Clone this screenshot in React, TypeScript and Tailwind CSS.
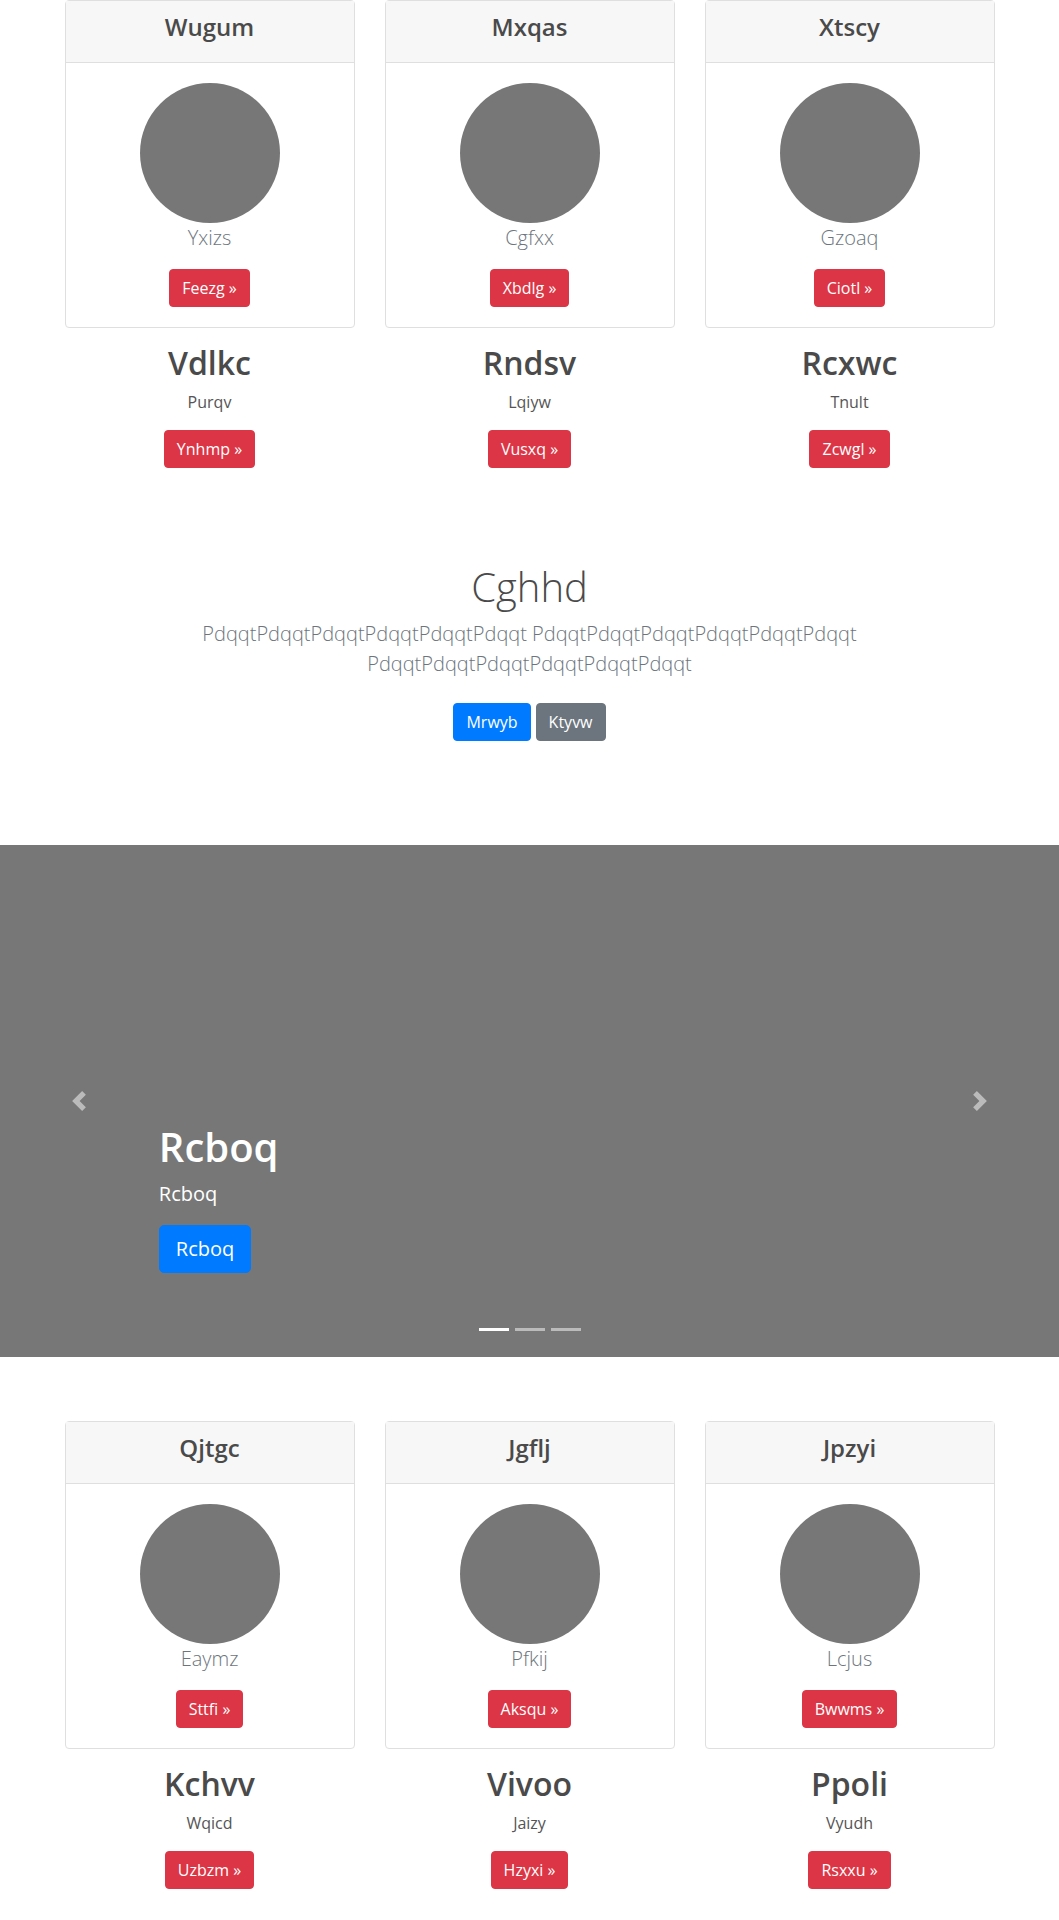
import React from 'react';

type Card = {
    header: string;
    lead: string;
    action: string;
    title: string;
    text: string;
    link: string;
};

const topCards: Card[] = [
    { header: 'Wugum', lead: 'Yxizs', action: 'Feezg', title: 'Vdlkc', text: 'Purqv', link: 'Ynhmp' },
    { header: 'Mxqas', lead: 'Cgfxx', action: 'Xbdlg', title: 'Rndsv', text: 'Lqiyw', link: 'Vusxq' },
    { header: 'Xtscy', lead: 'Gzoaq', action: 'Ciotl', title: 'Rcxwc', text: 'Tnult', link: 'Zcwgl' },
];

const bottomCards: Card[] = [
    { header: 'Qjtgc', lead: 'Eaymz', action: 'Sttfi', title: 'Kchvv', text: 'Wqicd', link: 'Uzbzm' },
    { header: 'Jgflj', lead: 'Pfkij', action: 'Aksqu', title: 'Vivoo', text: 'Jaizy', link: 'Hzyxi' },
    { header: 'Jpzyi', lead: 'Lcjus', action: 'Bwwms', title: 'Ppoli', text: 'Vyudh', link: 'Rsxxu' },
];

const word = 'Pdqqt'.repeat(6);

function DangerButton({ label }: { label: string }) {
    return (
        <a className="inline-block rounded-[4px] border border-[#dc3545] bg-[#dc3545] px-3 py-[6px] text-[16px] leading-6 text-white">
            {label} »
        </a>
    );
}

function Column({ card }: { card: Card }) {
    return (
        <div className="text-center">
            <div className="rounded-[4px] border border-[#dfdfdf] bg-white">
                <div className="border-b border-[#dfdfdf] bg-[#f7f7f7] px-5 py-3">
                    <h4 className="mb-2 text-[24px] font-semibold leading-[1.2] text-[#4a4a4a]">{card.header}</h4>
                </div>
                <div className="p-5">
                    <svg className="mx-auto block" width="140" height="140" viewBox="0 0 140 140">
                        <circle cx="70" cy="70" r="70" fill="#777" />
                    </svg>
                    <p className="mb-4 text-[20px] font-light leading-[1.5] text-[#6c757d]">{card.lead}</p>
                    <DangerButton label={card.action} />
                </div>
            </div>
            <h2 className="mt-4 mb-2 text-[32px] font-semibold leading-[1.2] text-[#4a4a4a]">{card.title}</h2>
            <p className="mb-4 text-[16px] leading-6 text-[#555]">{card.text}</p>
            <DangerButton label={card.link} />
        </div>
    );
}

function CardRow({ cards }: { cards: Card[] }) {
    return (
        <div className="mx-auto grid w-[930px] grid-cols-3 gap-[30px]">
            {cards.map((c) => (
                <Column key={c.header} card={c} />
            ))}
        </div>
    );
}

function Chevron({ dir }: { dir: 'prev' | 'next' }) {
    const d =
        dir === 'prev'
            ? 'M5.25 0l-4 4 4 4 1.5-1.5L4.25 4l2.5-2.5L5.25 0z'
            : 'M2.75 0l-1.5 1.5L3.75 4l-2.5 2.5L2.75 8l4-4-4-4z';
    return (
        <svg width="20" height="20" viewBox="0 0 8 8" className="opacity-50">
            <path d={d} fill="#fff" />
        </svg>
    );
}

function Carousel() {
    return (
        <div className="relative h-[512px] bg-[#777]">
            <div className="absolute left-[15%] right-[15%] bottom-12 py-5 text-left text-white">
                <h1 className="mb-2 text-[40px] font-semibold leading-[1.2]">Rcboq</h1>
                <p className="mb-4 text-[20px] leading-[1.5]">Rcboq</p>
                <p className="mb-4">
                    <a className="inline-block rounded-[5px] border border-[#007bff] bg-[#007bff] px-4 py-2 text-[20px] leading-[1.5] text-white">
                        Rcboq
                    </a>
                </p>
            </div>
            <div className="absolute inset-y-0 left-0 flex w-[15%] items-center justify-center">
                <Chevron dir="prev" />
            </div>
            <div className="absolute inset-y-0 right-0 flex w-[15%] items-center justify-center">
                <Chevron dir="next" />
            </div>
            <ol className="absolute bottom-0 left-[15%] right-[15%] mb-4 flex justify-center">
                {[0, 1, 2].map((i) => (
                    <li
                        key={i}
                        className={
                            'mx-[3px] box-content h-[3px] w-[30px] border-y-[10px] border-transparent bg-white bg-clip-padding ' +
                            (i === 0 ? 'opacity-100' : 'opacity-50')
                        }
                    />
                ))}
            </ol>
        </div>
    );
}

export default function App() {
    return (
        <div className="min-h-[1920px] bg-white font-['Open_Sans','Segoe_UI',sans-serif]">
            <CardRow cards={topCards} />

            <section className="pt-[95px] pb-[96px] text-center">
                <h1 className="mb-2 text-[40px] font-light leading-[1.2] text-[#4a4a4a]">Cghhd</h1>
                <p className="mx-auto mb-4 max-w-[700px] text-[20px] font-light leading-[1.5] text-[#6c757d]">
                    {word} {word} {word}
                </p>
                <div className="flex justify-center gap-[5px]">
                    <a className="my-2 inline-block rounded-[4px] border border-[#007bff] bg-[#007bff] px-3 py-[6px] text-[16px] leading-6 text-white">
                        Mrwyb
                    </a>
                    <a className="my-2 inline-block rounded-[4px] border border-[#6c757d] bg-[#6c757d] px-3 py-[6px] text-[16px] leading-6 text-white">
                        Ktyvw
                    </a>
                </div>
            </section>

            <Carousel />

            <div className="pt-16">
                <CardRow cards={bottomCards} />
            </div>
        </div>
    );
}
